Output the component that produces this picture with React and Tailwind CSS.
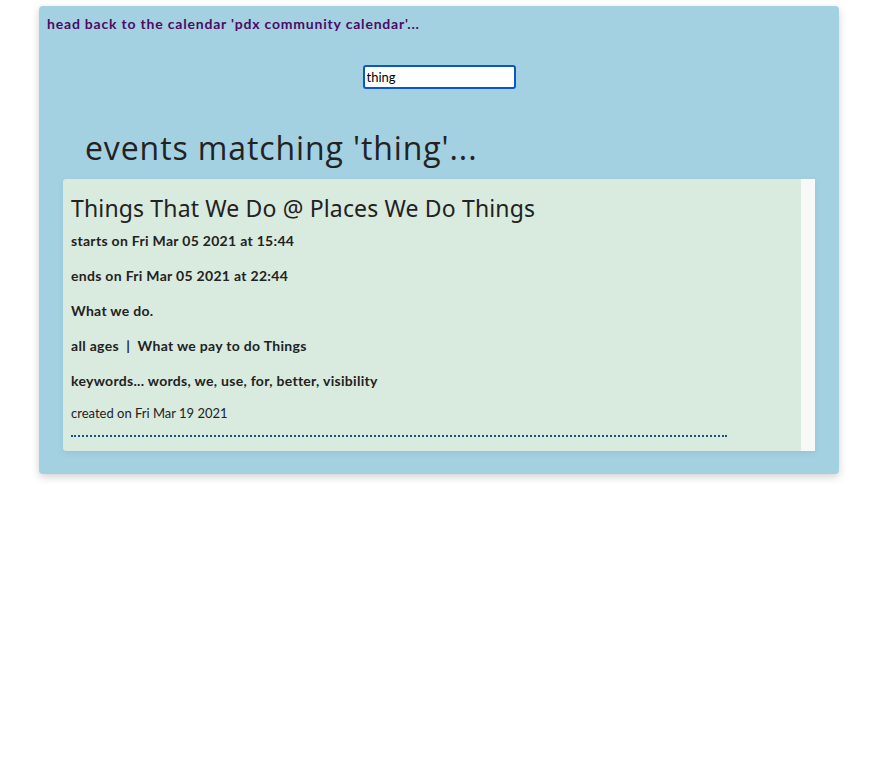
import { useState } from 'react';

const event = {
  title: 'Things That We Do @ Places We Do Things',
  starts: 'Fri Mar 05 2021 at 15:44',
  ends: 'Fri Mar 05 2021 at 22:44',
  description: 'What we do.',
  ages: 'all ages',
  cost: 'What we pay to do Things',
  keywords: 'words, we, use, for, better, visibility',
  created: 'Fri Mar 19 2021',
};

function EventCard({ ev }) {
  return (
    <div className="ml-6 mr-6 flex h-[272px] bg-[#d9eadf] shadow-[0_2px_6px_rgba(0,0,0,0.08)] rounded-[3px]">
      <div className="flex-1 pl-2 pt-[14px]">
        <h2 className="font-['Noto_Sans'] text-[23px] leading-[30px] tracking-[0.15px] text-[#222]">{ev.title}</h2>
        <div className="mt-[7px] space-y-[13px] text-[14px] leading-[22px] font-bold tracking-[0.3px] text-[#222]">
          <p>starts on {ev.starts}</p>
          <p>ends on {ev.ends}</p>
          <p>{ev.description}</p>
          <p>
            {ev.ages}&nbsp;&nbsp;|&nbsp;&nbsp;{ev.cost}
          </p>
          <p>keywords... {ev.keywords}</p>
        </div>
        <p className="mt-[11px] text-[13px] leading-[20px] text-[#222]">created on {ev.created}</p>
        <div className="mt-[12px] w-[656px] border-b-2 border-dotted border-[#1d4f8c]" />
      </div>
      <div className="w-[14px] bg-[#f8f8f8]" />
    </div>
  );
}

export default function App() {
  const [query, setQuery] = useState('thing');

  return (
    <div className="min-h-[766px] bg-white pt-[6px] font-['Lato',sans-serif]">
      <div className="ml-[39px] w-[800px] h-[468px] rounded-[4px] bg-[#a4d1e2] shadow-[0_3px_8px_rgba(0,0,0,0.18)]">
        <a href="#" className="block px-2 pt-[9px] text-[14px] leading-[18px] font-bold tracking-[0.8px] text-[#4b0b63]">
          head back to the calendar 'pdx community calendar'...
        </a>
        <div className="mt-[32px] flex justify-center">
          <input
            value={query}
            onChange={(e) => setQuery(e.target.value)}
            className="w-[153px] h-[24px] rounded-[3px] border-2 border-[#0b57c5] bg-white px-[2px] text-[13px] text-black outline-none"
          />
        </div>
        <h1 className="mt-[39px] pl-[46px] font-['Open_Sans'] text-[32px] leading-[40px] tracking-[0.9px] text-[#222]">
          events matching '{query}'...
        </h1>
        <div className="mt-[11px]">
          <EventCard ev={event} />
        </div>
      </div>
    </div>
  );
}
